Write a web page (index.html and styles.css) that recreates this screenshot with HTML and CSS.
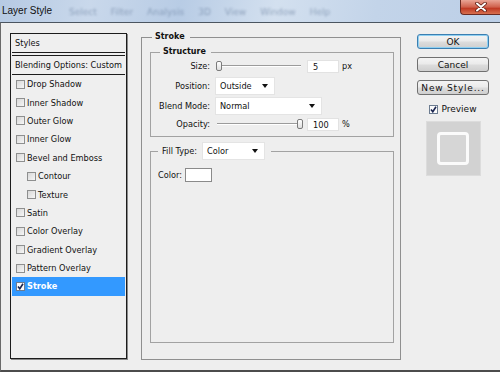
FILE: index.html
```html
<!DOCTYPE html>
<html lang="en">
  <head>
    <meta charset="UTF-8" />
    <meta name="viewport" content="width=device-width, initial-scale=1.0" />
    <title>Layer Style</title>
    <link rel="stylesheet" href="styles.css">
  </head>
  <body>
    <div class="titlebar">
      <span class="title">Layer Style</span>
      <div class="ghost-menu">
        <span>Select</span><span>Filter</span><span>Analysis</span><span>3D</span><span>View</span><span>Window</span><span>Help</span>
      </div>
      <div class="close">
        <svg width="14" height="10" viewBox="0 0 14 10">
          <path d="M3 1.5 L11 8.5 M11 1.5 L3 8.5" stroke="#5a1a10" stroke-width="3.6" stroke-linecap="round" />
          <path d="M3 1.5 L11 8.5 M11 1.5 L3 8.5" stroke="#fff" stroke-width="2" stroke-linecap="round" />
        </svg>
      </div>
    </div>

    <div class="dialog">
      <!-- Styles list -->
      <div class="styles-list">
        <div class="list-head">Styles</div>
        <div class="list-head blending">Blending Options: Custom</div>
        <div class="item"><span class="check"></span>Drop Shadow</div>
        <div class="item"><span class="check"></span>Inner Shadow</div>
        <div class="item"><span class="check"></span>Outer Glow</div>
        <div class="item"><span class="check"></span>Inner Glow</div>
        <div class="item"><span class="check"></span>Bevel and Emboss</div>
        <div class="item nested"><span class="check"></span>Contour</div>
        <div class="item nested"><span class="check"></span>Texture</div>
        <div class="item"><span class="check"></span>Satin</div>
        <div class="item"><span class="check"></span>Color Overlay</div>
        <div class="item"><span class="check"></span>Gradient Overlay</div>
        <div class="item"><span class="check"></span>Pattern Overlay</div>
        <div class="item selected">
          <span class="check checked">
            <svg width="7" height="7" viewBox="0 0 7 7"><path d="M1 3.6 L2.8 5.8 L6 0.8" fill="none" stroke="#1b2550" stroke-width="1.6" /></svg>
          </span>Stroke
        </div>
      </div>

      <!-- Stroke settings -->
      <fieldset class="group stroke">
        <legend>Stroke</legend>

        <fieldset class="group structure">
          <legend>Structure</legend>
          <div class="form-grid">
            <label>Size:</label>
            <div class="control">
              <div class="slider"><span class="thumb" style="left: 1px"></span></div>
              <span class="field">5</span>
              <span class="unit">px</span>
            </div>

            <label>Position:</label>
            <div class="control">
              <div class="select position">Outside<span class="caret"></span></div>
            </div>

            <label>Blend Mode:</label>
            <div class="control">
              <div class="select blend">Normal<span class="caret"></span></div>
            </div>

            <label>Opacity:</label>
            <div class="control">
              <div class="slider"><span class="thumb" style="left: 82px"></span></div>
              <span class="field">100</span>
              <span class="unit">%</span>
            </div>
          </div>
        </fieldset>

        <fieldset class="group fill">
          <legend>
            <span>Fill Type:</span>
            <span class="select filltype">Color<span class="caret"></span></span>
          </legend>
          <div class="color-row">
            <span>Color:</span>
            <span class="swatch"></span>
          </div>
        </fieldset>
      </fieldset>

      <!-- Buttons and preview -->
      <div class="actions">
        <div class="btn default">OK</div>
        <div class="btn">Cancel</div>
        <div class="btn wide">New Style...</div>
        <div class="preview-toggle">
          <span class="check checked">
            <svg width="7" height="7" viewBox="0 0 7 7"><path d="M1 3.6 L2.8 5.8 L6 0.8" fill="none" stroke="#1b2550" stroke-width="1.6" /></svg>
          </span>
          Preview
        </div>
        <div class="preview-box">
          <div class="preview-shape"></div>
        </div>
      </div>
    </div>
  </body>
</html>
```

FILE: styles.css
```css
* {
  box-sizing: border-box;
}
body {
  margin: 0;
  width: 500px;
  height: 372px;
  overflow: hidden;
  background: #eeeeee;
  font-family: 'DejaVu Sans', Verdana, sans-serif;
  font-size: 8.2px;
  color: #111;
}

/* Title bar */
.titlebar {
  height: 22px;
  display: flex;
  align-items: center;
  background: linear-gradient(100deg, #b6cae3 0%, #c9d8eb 18%, #b8cce5 36%, #d3e0ef 55%, #c3d4e9 75%, #bccfe7 100%);
  position: relative;
}
.title {
  font-family: 'Liberation Sans', Arial, sans-serif;
  font-size: 10px;
  padding-left: 2px;
  margin-top: -2px;
}
.ghost-menu {
  display: flex;
  gap: 14px;
  margin-left: 17px;
  margin-top: 2px;
  font-size: 9px;
  color: rgba(70, 95, 130, 0.45);
  filter: blur(1.3px);
}
.close {
  margin-left: auto;
  align-self: flex-start;
  width: 40px;
  height: 15px;
  border: 1px solid #6b2b22;
  border-top: none;
  border-right: none;
  border-radius: 0 0 0 4px;
  background: linear-gradient(#e9a596, #d0614c 50%, #c03a24 60%, #d7704f);
  display: flex;
  align-items: center;
  justify-content: center;
}

/* Dialog body */
.dialog {
  height: 350px;
  display: flex;
  align-items: flex-start;
  padding: 9px 0 0 9px;
  border-top: 1px solid #4b5560;
  border-left: 1px solid #6a6a6a;
  border-bottom: 2px solid #4c4c4c;
}

/* Styles list */
.styles-list {
  width: 117px;
  height: 326px;
  margin-top: 1px;
  margin-right: 14px;
  border: 1px solid #1c1c1c;
  box-shadow: 1px 1px 0 #8a8a8a;
  background: #efefef;
  padding: 0 1px;
}
.list-head {
  height: 19px;
  line-height: 19px;
  padding-left: 3px;
  border-bottom: 1px solid #1c1c1c;
}
.list-head.blending {
  margin-top: 2px;
  border-top: 1px solid #1c1c1c;
  height: 20px;
}
.item {
  height: 18.4px;
  display: flex;
  align-items: center;
  padding-left: 4px;
}
.item.nested {
  padding-left: 15px;
}
.item.selected {
  background: #3399ff;
  color: #fff;
  font-weight: bold;
}
.check {
  width: 9px;
  height: 9px;
  margin-right: 2px;
  border: 1px solid #8e8f8f;
  background: linear-gradient(135deg, #d8d8d8, #f6f6f6);
  display: inline-flex;
  align-items: center;
  justify-content: center;
  flex-shrink: 0;
}
.check.checked {
  background: #fbfbfb;
  border-color: #6c7c90;
}

/* Group boxes */
.group {
  margin: 0;
  border: 1px solid #a2a2a2;
  padding: 0;
}
.group legend {
  font-weight: bold;
  font-size: 8px;
  line-height: 10px;
}
.stroke {
  width: 260px;
  height: 328px;
  padding: 0 6px 0 8px;
  border-color: #8f8f8f;
}
.stroke > legend {
  margin-left: 2px;
  padding: 0 5px 0 3px;
}
.structure {
  margin-top: 5px;
  padding-bottom: 5px;
}
.structure > legend {
  margin-left: 9px;
  padding: 0 5px 0 3px;
}
.form-grid {
  display: grid;
  grid-template-columns: 59px 1fr;
  grid-template-rows: 18px 18px 18px 14px;
  column-gap: 5px;
  row-gap: 2px;
}
.form-grid label {
  text-align: right;
  align-self: center;
}
.control {
  display: flex;
  align-items: center;
}
.slider {
  position: relative;
  width: 86px;
  height: 10px;
  margin-right: 6px;
}
.slider::before {
  content: '';
  position: absolute;
  left: 2px;
  right: 0;
  top: 4px;
  border-top: 1px solid #9b9b9b;
  border-bottom: 1px solid #fff;
}
.thumb {
  position: absolute;
  top: 0;
  width: 6px;
  height: 10px;
  border: 1px solid #7b7b7b;
  border-radius: 2px;
  background: linear-gradient(#ffffff, #dedede);
}
.field {
  width: 32px;
  height: 13px;
  line-height: 13px;
  padding-left: 5px;
  background: #fff;
  border: 1px solid #e2e2e2;
}
.unit {
  margin-left: 3px;
}
.select {
  position: relative;
  height: 18px;
  display: flex;
  align-items: center;
  padding-left: 4px;
  background: #fff;
  border: 1px solid #e4e4e4;
}
.position {
  width: 60px;
}
.blend {
  width: 107px;
}
.caret {
  margin-left: auto;
  margin-right: 6px;
  border-left: 3.5px solid transparent;
  border-right: 3.5px solid transparent;
  border-top: 4px solid #111;
}

/* Fill type group */
.fill {
  margin-top: 5px;
  height: 201px;
}
.fill > legend {
  margin-left: 7px;
  padding: 0 6px 0 4px;
  display: flex;
  align-items: center;
  gap: 5px;
  font-weight: normal;
  font-size: 8.2px;
  line-height: 18px;
}
.filltype {
  width: 63px;
  font-weight: normal;
}
.color-row {
  margin-top: 8px;
  height: 14px;
  padding-left: 7px;
  display: flex;
  align-items: center;
  gap: 3px;
}
.swatch {
  width: 27px;
  height: 14px;
  background: #fff;
  border: 1px solid #8a8a8a;
}

/* Right column */
.actions {
  width: 72px;
  margin-left: 16px;
  margin-top: 2px;
  display: flex;
  flex-direction: column;
  gap: 8px;
  font-size: 9px;
}
.btn {
  height: 15px;
  display: flex;
  align-items: center;
  justify-content: center;
  border: 1px solid #707070;
  border-radius: 3px;
  background: linear-gradient(#f4f4f4 0%, #ebebeb 45%, #dcdcdc 55%, #cfcfcf 100%);
}
.btn.default {
  border-color: #3c7fb1;
  box-shadow: inset 0 0 0 1px #8fd0f2;
}
.btn.wide {
  letter-spacing: 0.8px;
}
.preview-toggle {
  margin-top: 1px;
  height: 10px;
  display: flex;
  align-items: center;
  justify-content: center;
  gap: 1px;
}
.preview-box {
  align-self: center;
  margin-top: -1px;
  width: 55px;
  height: 55px;
  background: #d2d2d2;
  border: 1px solid #dcdcdc;
  display: flex;
  align-items: center;
  justify-content: center;
}
.preview-shape {
  width: 32px;
  height: 33px;
  border: 3px solid #fbfbfb;
  border-radius: 4px;
  background: #d6d6d6;
}
```
